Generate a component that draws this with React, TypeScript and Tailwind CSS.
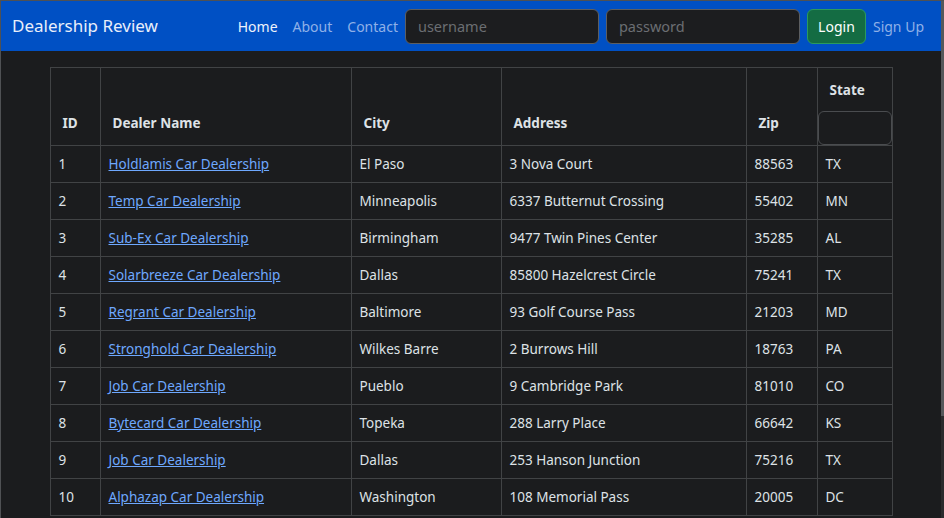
import React from "react";

const dealers = [
  [1, "Holdlamis Car Dealership", "El Paso", "3 Nova Court", "88563", "TX"],
  [2, "Temp Car Dealership", "Minneapolis", "6337 Butternut Crossing", "55402", "MN"],
  [3, "Sub-Ex Car Dealership", "Birmingham", "9477 Twin Pines Center", "35285", "AL"],
  [4, "Solarbreeze Car Dealership", "Dallas", "85800 Hazelcrest Circle", "75241", "TX"],
  [5, "Regrant Car Dealership", "Baltimore", "93 Golf Course Pass", "21203", "MD"],
  [6, "Stronghold Car Dealership", "Wilkes Barre", "2 Burrows Hill", "18763", "PA"],
  [7, "Job Car Dealership", "Pueblo", "9 Cambridge Park", "81010", "CO"],
  [8, "Bytecard Car Dealership", "Topeka", "288 Larry Place", "66642", "KS"],
  [9, "Job Car Dealership", "Dallas", "253 Hanson Junction", "75216", "TX"],
  [10, "Alphazap Car Dealership", "Washington", "108 Memorial Pass", "20005", "DC"],
];

function NavBar() {
  return (
    <nav className="flex h-[50px] items-center justify-between bg-[#0050c4] pl-[11px] pr-[17px]">
      <a className="text-[17px] text-[#e9eefa]">Dealership Review</a>
      <div className="flex items-center">
        <a className="text-[14px] text-[#eef2fb]">Home</a>
        <a className="ml-[15px] text-[14px] text-[#8fb0e8]">About</a>
        <a className="ml-[15px] text-[14px] text-[#8fb0e8]">Contact</a>
        <input
          placeholder="username"
          className="ml-[7px] h-[35px] w-[194px] rounded-[6px] border border-[#5c5e61] bg-[#1c1d1f] px-3 text-[14.5px] text-[#dee2e6] outline-none placeholder:text-[#6b6e72]"
        />
        <input
          placeholder="password"
          className="ml-[7px] h-[35px] w-[194px] rounded-[6px] border border-[#5c5e61] bg-[#1c1d1f] px-3 text-[14.5px] text-[#dee2e6] outline-none placeholder:text-[#6b6e72]"
        />
        <button className="ml-[7px] h-[35px] w-[59px] rounded-[6px] border border-[#2a9a5e] bg-[#146c43] text-[14px] text-white">
          Login
        </button>
        <a className="ml-[7px] text-[14px] text-[#8fb0e8]">Sign Up</a>
      </div>
    </nav>
  );
}

function DealerTable() {
  const th = "border border-[#414345] px-3 pb-[10px] text-left align-bottom font-bold leading-6";
  const td = "border border-[#414345] px-2 py-[6px] leading-6";
  return (
    <table className="mx-auto mt-[16px] w-[842px] table-fixed border-collapse text-[13.5px] text-[#dee2e6]">
      <colgroup>
        <col className="w-[50px]" />
        <col className="w-[251px]" />
        <col className="w-[150px]" />
        <col className="w-[245px]" />
        <col className="w-[71px]" />
        <col className="w-[75px]" />
      </colgroup>
      <thead>
        <tr>
          <th className={th}>ID</th>
          <th className={th}>Dealer Name</th>
          <th className={th}>City</th>
          <th className={th}>Address</th>
          <th className={th}>Zip</th>
          <th className="border border-[#414345] p-0 text-left align-bottom font-bold leading-6">
            <div className="px-3 pt-[10px] pb-[9px]">State</div>
            <input className="block h-[34px] w-full rounded-[6px] border border-[#4a4c4f] bg-[#1b1c1e] outline-none" />
          </th>
        </tr>
      </thead>
      <tbody>
        {dealers.map((d) => (
          <tr key={d[0]}>
            <td className={td}>{d[0]}</td>
            <td className={td}>
              <a className="text-[#6ea8fe] underline">{d[1]}</a>
            </td>
            <td className={td}>{d[2]}</td>
            <td className={td}>{d[3]}</td>
            <td className={td}>{d[4]}</td>
            <td className={td}>{d[5]}</td>
          </tr>
        ))}
      </tbody>
    </table>
  );
}

export default function App() {
  return (
    <div
      className="flex h-[518px] w-[944px] overflow-hidden border-t border-l border-[#4f5154] bg-[#1b1c1e]"
      style={{ fontFamily: '"Noto Sans", "Open Sans", sans-serif' }}
    >
      <div className="min-w-0 flex-1">
        <NavBar />
        <DealerTable />
      </div>
      <div className="flex w-[3px] flex-col bg-[#2a2b2d]">
        <div className="h-[415px] bg-[#55585b]" />
      </div>
    </div>
  );
}
